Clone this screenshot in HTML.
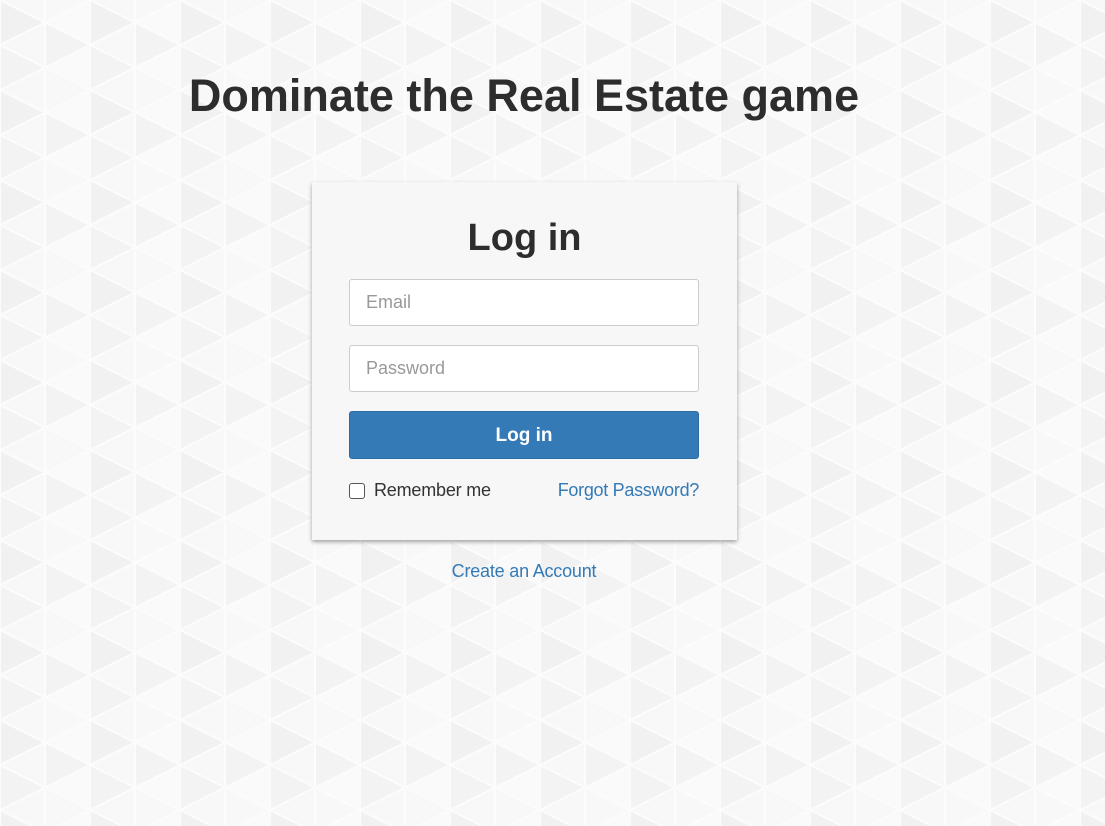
<!DOCTYPE html>
<html><head><meta charset="utf-8"><style>
*{box-sizing:border-box;margin:0;padding:0}
body{width:1105px;height:826px;overflow:hidden;font-family:"Liberation Sans",Arial,sans-serif;background:#f6f6f6;position:relative;color:#333}
.bg{position:absolute;inset:0}
h1{position:absolute;left:0;width:1048px;text-align:center;top:70px;font-size:45px;font-weight:bold;color:#2d2d2d}
.card{position:absolute;left:312px;top:182px;width:425px;height:358px;background:#f7f7f7;box-shadow:0 2px 4px rgba(0,0,0,.35)}
.t{position:absolute;left:0;width:425px;text-align:center;top:35px;font-size:38px;font-weight:bold;color:#2d2d2d}
.in{position:absolute;left:37px;width:350px;height:47px;background:#fff;border:1px solid #ccc;border-radius:3px;font-size:18px;color:#999;padding:12px 16px}
.btn{position:absolute;left:37px;top:229px;width:350px;height:48px;background:#337ab7;border:1px solid #2e6da4;border-radius:3px;color:#fff;font-weight:bold;font-size:19px;text-align:center;line-height:47px}
.cb{position:absolute;left:37px;top:301px;width:16px;height:16px;border:1px solid #555;border-radius:3px;background:#fff}
.rm{position:absolute;left:62px;top:298px;font-size:18px;color:#333;letter-spacing:-.2px}
.fp{position:absolute;right:38px;top:298px;font-size:18px;color:#337ab7;letter-spacing:-.3px}
.ca{position:absolute;left:0;width:1048px;text-align:center;top:561px;font-size:18px;color:#337ab7;letter-spacing:-.2px}
</style></head><body>
<svg class="bg" width="1105" height="826" xmlns="http://www.w3.org/2000/svg">
<defs><pattern id="p" width="90" height="90" patternUnits="userSpaceOnUse">
<rect width="90" height="90" fill="#f8f8f8"/>
<polygon points="0,0 45,22 0,45" fill="#f1f1f1"/>
<polygon points="45,22 90,45 45,67" fill="#f3f3f3"/>
<polygon points="90,0 45,22 90,45" fill="#fafafa"/>
<polygon points="0,45 45,67 0,90" fill="#f3f3f3"/>
<polygon points="90,45 45,67 90,90" fill="#fafafa"/>
<path d="M0 0V90M45 0V90M0 0L90 45M0 45L90 90M0 45L90 0M0 90L90 45" stroke="#fcfcfc" stroke-width="2"/>
</pattern></defs>
<rect width="1105" height="826" fill="url(#p)"/>
</svg>
<h1>Dominate the Real Estate game</h1>
<div class="card">
<div class="t">Log in</div>
<div class="in" style="top:97px">Email</div>
<div class="in" style="top:163px">Password</div>
<div class="btn">Log in</div>
<div class="cb"></div>
<div class="rm">Remember me</div>
<div class="fp">Forgot Password?</div>
</div>
<div class="ca">Create an Account</div>
</body></html>
